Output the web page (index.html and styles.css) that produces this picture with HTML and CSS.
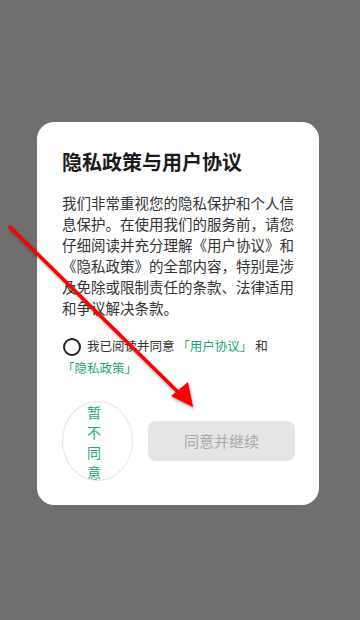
FILE: index.html
```html
<!DOCTYPE html>
<html lang="zh-CN">
<head>
<meta charset="UTF-8">
<meta name="viewport" content="width=device-width, initial-scale=1.0">
<title>隐私政策与用户协议</title>
<link rel="stylesheet" href="styles.css">
</head>
<body>

<div class="dialog">
    <div class="dialog-title">隐私政策与用户协议</div>

    <div class="dialog-text">
        我们非常重视您的隐私保护和个人信息保护。在使用我们的服务前，请您仔细阅读并充分理解《用户协议》和《隐私政策》的全部内容，特别是涉及免除或限制责任的条款、法律适用和争议解决条款。
    </div>

    <div class="agree">
        <span class="check"></span>我已阅读并同意 <span class="link">「用户协议」</span> 和 <span class="link">「隐私政策」</span>
    </div>

    <div class="actions">
        <div class="btn-refuse">暂不同意</div>
        <div class="btn-accept">同意并继续</div>
    </div>
</div>

<!-- 标注箭头 -->
<svg class="arrow" width="360" height="620" viewBox="0 0 360 620">
    <line x1="10" y1="227" x2="181" y2="395" stroke="#ff0000" stroke-width="3.5" stroke-linecap="round"/>
    <polygon points="193,407 171,396 188,382" fill="#ff0000"/>
</svg>

</body>
</html>
```

FILE: styles.css
```css
body {
    margin: 0;
    height: 620px;
    background: #6f6f6f;
    font-family: "Noto Sans CJK SC", "Noto Sans", sans-serif;
    overflow: hidden;
    position: relative;
}

.dialog {
    width: 282px;
    margin: 122px 0 0 37px;
    padding: 26px 24px 24px 25px;
    box-sizing: border-box;
    background: #fff;
    border-radius: 17px;
}

.dialog-title {
    font-size: 20px;
    line-height: 28px;
    font-weight: bold;
    color: #1b1b1b;
}

.dialog-text {
    margin-top: 16px;
    font-size: 14.5px;
    line-height: 21px;
    color: #333;
}

/* 勾选协议 */
.agree {
    margin-top: 17px;
    font-size: 12.5px;
    line-height: 22px;
    color: #333;
}

.check {
    display: inline-block;
    width: 14px;
    height: 14px;
    border: 2px solid #222;
    border-radius: 50%;
    margin: 0 6px 0 1px;
    vertical-align: -5px;
}

.link {
    color: #1aa874;
    white-space: nowrap;
}

/* 按钮 */
.actions {
    margin-top: 22px;
    display: flex;
    align-items: center;
}

.btn-refuse {
    width: 71px;
    height: 80px;
    box-sizing: border-box;
    padding: 0 24px;
    border: 1px solid #e4e4e4;
    border-radius: 50%;
    font-size: 14px;
    line-height: 20px;
    color: #1aa874;
    overflow: hidden;
}

.btn-accept {
    flex: 1;
    margin-left: 15px;
    height: 40px;
    line-height: 40px;
    text-align: center;
    background: #e5e5e5;
    border-radius: 8px;
    font-size: 15px;
    color: #a9a9a9;
}

.arrow {
    position: absolute;
    left: 0;
    top: 0;
    pointer-events: none;
    filter: drop-shadow(1px 2px 1.5px rgba(0,0,0,0.35));
}
```
